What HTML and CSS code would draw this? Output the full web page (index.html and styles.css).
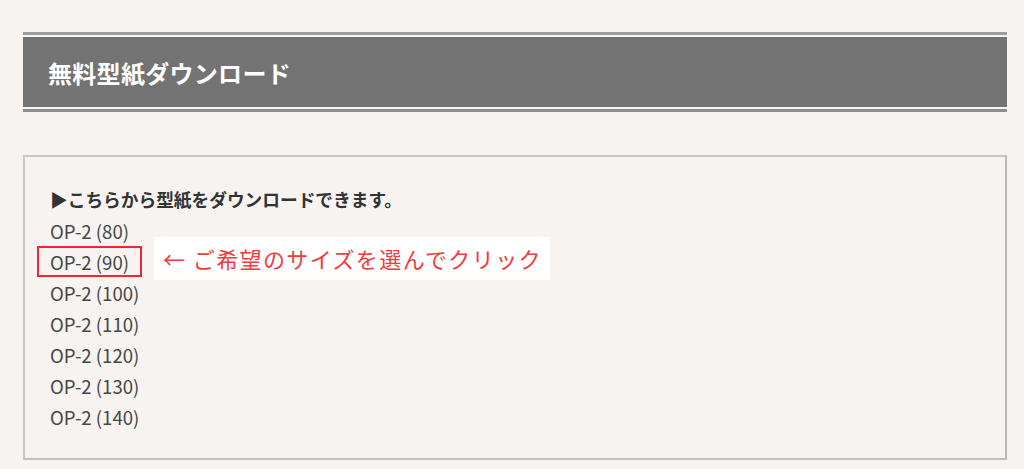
FILE: index.html
```html
<!DOCTYPE html>
<html lang="ja">
<head>
<meta charset="utf-8">
<title>無料型紙ダウンロード</title>
<link rel="stylesheet" href="styles.css">
</head>
<body>
<div class="page">
  <div class="heading">
    <h2 class="heading-inner">無料型紙ダウンロード</h2>
  </div>
  <div class="box">
    <p class="lead">▶こちらから型紙をダウンロードできます。</p>
    <ul class="links">
      <li><a href="#">OP-2 (80)</a></li>
      <li class="picked"><a href="#">OP-2 (90)</a><span class="note">← ご希望のサイズを選んでクリック</span></li>
      <li><a href="#">OP-2 (100)</a></li>
      <li><a href="#">OP-2 (110)</a></li>
      <li><a href="#">OP-2 (120)</a></li>
      <li><a href="#">OP-2 (130)</a></li>
      <li><a href="#">OP-2 (140)</a></li>
    </ul>
  </div>
</div>
</body>
</html>
```

FILE: styles.css
```css
html, body {
  margin: 0;
  padding: 0;
  background: #f6f3f0;
}
body {
  font-family: "Noto Sans CJK JP", "Noto Sans", sans-serif;
  color: #444;
}
.page {
  padding: 32px 17px 0 23px;
}
.heading {
  border-top: 3px solid #9c9c9c;
  border-bottom: 3px solid #8c8c8c;
  padding: 2px 0;
}
.heading-inner {
  margin: 0;
  background: #737373;
  height: 70px;
  display: flex;
  align-items: center;
  padding-left: 25px;
  color: #fff;
  font-size: 24px;
  font-weight: bold;
  letter-spacing: 0.3px;
}
.box {
  margin-top: 43px;
  border: 2px solid #cac6c2;
  border-right-color: #bbb7b3;
  border-bottom-color: #c2beba;
  padding: 27px 25px 24px 25px;
  height: 250px;
}
.lead {
  margin: 0;
  font-size: 17.7px;
  line-height: 31px;
  font-weight: bold;
  color: #333;
}
.links {
  list-style: none;
  margin: 0;
  padding: 0;
}
.links li {
  font-size: 18.6px;
  line-height: 31px;
}
.links a {
  color: #474747;
  text-decoration: none;
}
.picked {
  position: relative;
}
.picked a {
  position: relative;
}
.picked a::before {
  content: "";
  position: absolute;
  left: -13px;
  right: -13px;
  top: -2px;
  bottom: -2px;
  border: 2px solid #f0262b;
}
.note {
  position: absolute;
  left: 104px;
  top: -9px;
  height: 43px;
  width: 396px;
  box-sizing: border-box;
  background: #fff;
  color: #f03c3c;
  font-size: 22px;
  line-height: 43px;
  padding-left: 9px;
  letter-spacing: 1.4px;
  white-space: nowrap;
}
```
